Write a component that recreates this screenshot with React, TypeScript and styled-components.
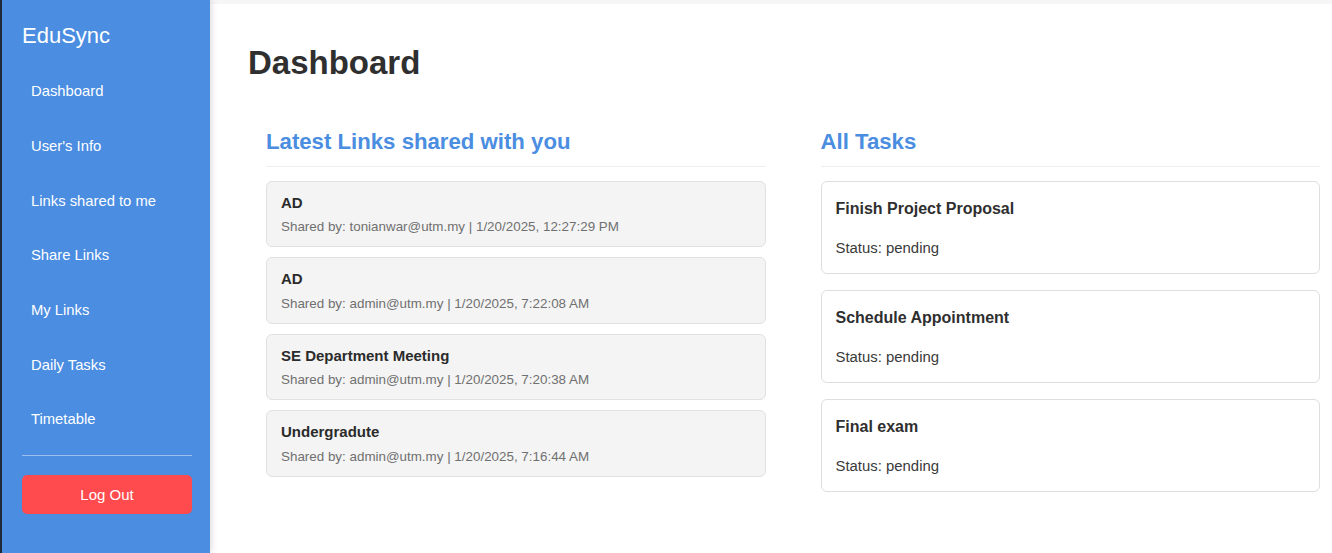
import React from "react";
import styled, { createGlobalStyle } from "styled-components";

const GlobalStyle = createGlobalStyle`
  * { box-sizing: border-box; }
  html, body { margin: 0; padding: 0; background: #ffffff; }
  body { font-family: "Liberation Sans", Arial, sans-serif; }
`;

const Page = styled.div`
  display: flex;
  min-height: 553px;
  height: 553px;
  overflow: hidden;
`;

const Sidebar = styled.aside`
  flex: 0 0 210px;
  width: 210px;
  background: #4a8de1;
  border-left: 2px solid #1e2a3a;
  padding: 23px 18px 0 20px;
  display: flex;
  flex-direction: column;
  box-shadow: 2px 0 6px rgba(0, 0, 0, 0.12);
  position: relative;
  z-index: 1;
`;

const Brand = styled.div`
  color: #ffffff;
  font-size: 22px;
  line-height: 26px;
  margin-bottom: 15px;
`;

const NavList = styled.nav`
  display: flex;
  flex-direction: column;
`;

const NavItem = styled.a`
  display: flex;
  align-items: center;
  height: 54.67px;
  padding: 0 9px;
  color: #ffffff;
  font-size: 14.8px;
  text-decoration: none;
`;

const Divider = styled.hr`
  border: none;
  height: 1px;
  background: rgba(255, 255, 255, 0.45);
  margin: 8px 0 19px 0;
`;

const LogoutButton = styled.button`
  height: 39px;
  border: none;
  border-radius: 5px;
  background: #ff4b4e;
  color: #ffffff;
  font-family: "Liberation Sans", Arial, sans-serif;
  font-size: 15px;
  cursor: pointer;
`;

const Main = styled.main`
  flex: 1;
  border-top: 4px solid #f6f6f6;
  padding: 0 12px 0 38px;
  background: #ffffff;
`;

const Title = styled.h1`
  margin: 40px 0 0 0;
  font-size: 33px;
  line-height: 37px;
  font-weight: bold;
  color: #2f2f2f;
`;

const Columns = styled.div`
  display: grid;
  grid-template-columns: 1fr 1fr;
  column-gap: 55px;
  padding-left: 18px;
  margin-top: 47.5px;
`;

const Section = styled.section`
  display: flex;
  flex-direction: column;
`;

const SectionTitle = styled.h2`
  margin: 0 0 14px 0;
  font-size: 22.2px;
  line-height: 25px;
  font-weight: bold;
  color: #4a8de1;
  padding-bottom: 12px;
  border-bottom: 1px solid #eeeeee;
`;

const List = styled.div<{ $gap: number }>`
  display: flex;
  flex-direction: column;
  gap: ${(p) => p.$gap}px;
`;

const LinkCard = styled.div`
  background: #f4f4f4;
  border: 1px solid #e1e1e1;
  border-radius: 6px;
  padding: 12px 14px;
`;

const LinkTitle = styled.div`
  font-size: 15px;
  line-height: 17px;
  font-weight: bold;
  color: #2b2b2b;
  margin-bottom: 8.5px;
`;

const LinkMeta = styled.div`
  font-size: 13.4px;
  line-height: 15px;
  color: #707070;
`;

const TaskCard = styled.div`
  background: #ffffff;
  border: 1px solid #dedede;
  border-radius: 6px;
  padding: 18.5px 14px 15.5px 14px;
`;

const TaskTitle = styled.div`
  font-size: 16px;
  line-height: 18.5px;
  font-weight: bold;
  color: #2f2f2f;
  margin-bottom: 21.5px;
`;

const TaskStatus = styled.div`
  font-size: 14.9px;
  line-height: 17px;
  color: #3a3a3a;
`;

const navItems = [
  "Dashboard",
  "User's Info",
  "Links shared to me",
  "Share Links",
  "My Links",
  "Daily Tasks",
  "Timetable",
];

const links = [
  { title: "AD", meta: "Shared by: tonianwar@utm.my | 1/20/2025, 12:27:29 PM" },
  { title: "AD", meta: "Shared by: admin@utm.my | 1/20/2025, 7:22:08 AM" },
  { title: "SE Department Meeting", meta: "Shared by: admin@utm.my | 1/20/2025, 7:20:38 AM" },
  { title: "Undergradute", meta: "Shared by: admin@utm.my | 1/20/2025, 7:16:44 AM" },
];

const tasks = [
  { title: "Finish Project Proposal", status: "pending" },
  { title: "Schedule Appointment", status: "pending" },
  { title: "Final exam", status: "pending" },
];

export default function App() {
  return (
    <>
      <GlobalStyle />
      <Page>
        <Sidebar>
          <Brand>EduSync</Brand>
          <NavList>
            {navItems.map((n) => (
              <NavItem key={n} href="#">
                {n}
              </NavItem>
            ))}
          </NavList>
          <Divider />
          <LogoutButton>Log Out</LogoutButton>
        </Sidebar>
        <Main>
          <Title>Dashboard</Title>
          <Columns>
            <Section>
              <SectionTitle>Latest Links shared with you</SectionTitle>
              <List $gap={10}>
                {links.map((l, i) => (
                  <LinkCard key={i}>
                    <LinkTitle>{l.title}</LinkTitle>
                    <LinkMeta>{l.meta}</LinkMeta>
                  </LinkCard>
                ))}
              </List>
            </Section>
            <Section>
              <SectionTitle>All Tasks</SectionTitle>
              <List $gap={16}>
                {tasks.map((t, i) => (
                  <TaskCard key={i}>
                    <TaskTitle>{t.title}</TaskTitle>
                    <TaskStatus>Status: {t.status}</TaskStatus>
                  </TaskCard>
                ))}
              </List>
            </Section>
          </Columns>
        </Main>
      </Page>
    </>
  );
}
